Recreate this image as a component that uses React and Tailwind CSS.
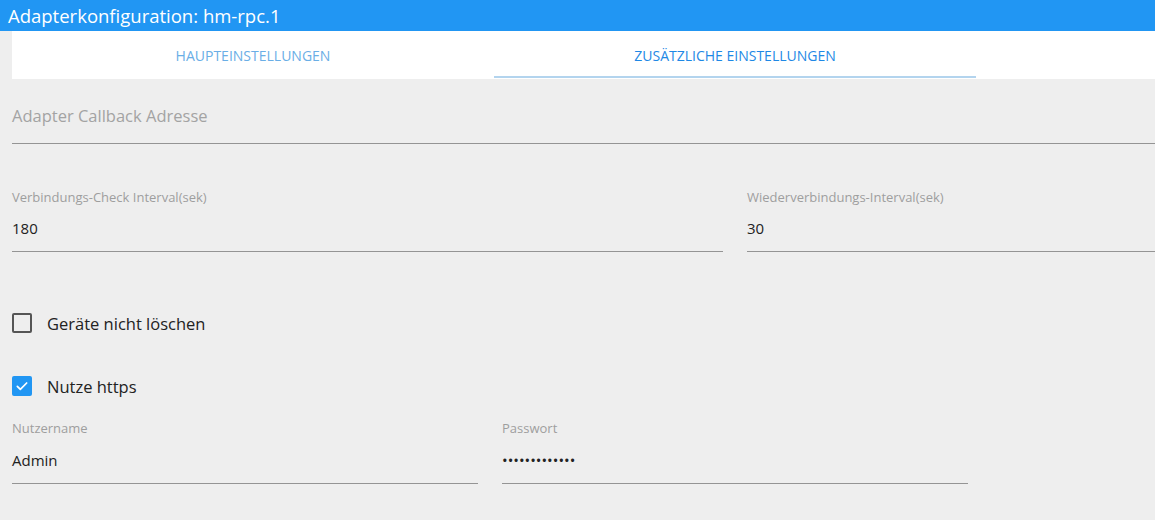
import React from "react";

const font = { fontFamily: '"Open Sans", "Noto Sans", sans-serif' };

const Field = ({ label, value, className, valueGap = "mt-[13px]" }) => (
  <div className={`flex flex-col ${className}`}>
    <label className="text-[13px] leading-[16px] text-[#9e9e9e]">{label}</label>
    <div className={`${valueGap} text-[15px] leading-[20px] text-[#222]`}>{value}</div>
    <div className="mt-[13px] h-px bg-[#949494]" />
  </div>
);

const Checkbox = ({ checked, label }) => (
  <div className="flex items-center gap-[15px]">
    {checked ? (
      <span className="flex h-[20px] w-[20px] items-center justify-center rounded-[2px] bg-[#2196f3]">
        <svg viewBox="0 0 24 24" className="h-[16px] w-[16px]" fill="none">
          <path d="M5 12.5l4.5 4.5L19 7.5" stroke="#fff" strokeWidth="2.6" strokeLinecap="round" strokeLinejoin="round" />
        </svg>
      </span>
    ) : (
      <span className="h-[20px] w-[20px] rounded-[2px] border-2 border-[#555]" />
    )}
    <span className="pt-[3px] text-[16.5px] leading-[24px] text-[#222]">{label}</span>
  </div>
);

export default function App() {
  return (
    <div className="h-[520px] w-[1155px] overflow-hidden bg-[#eeeeee]" style={font}>
      <div className="flex h-[31px] items-center bg-[#2196f3] px-[8px] text-[18.5px] text-white">
        Adapterkonfiguration: hm-rpc.1
      </div>

      <div className="ml-[12px] flex h-[48px] bg-white">
        <div className="flex w-[482px] items-center justify-center text-[14px] text-[#6aaee6]">
          HAUPTEINSTELLUNGEN
        </div>
        <div className="relative flex w-[482px] items-center justify-center text-[14px] text-[#1e88e5]">
          ZUSÄTZLICHE EINSTELLUNGEN
          <span className="absolute bottom-[1px] left-0 right-0 h-[2px] bg-[#b3d4ee]" />
        </div>
      </div>

      <div className="pl-[12px]">
        <div className="pt-[25px] text-[16.5px] leading-[24px] text-[#a3a3a3]">Adapter Callback Adresse</div>
        <div className="mt-[15px] h-px bg-[#949494]" />

        <div className="mt-[45px] flex gap-[24px]">
          <Field className="w-[711px]" label="Verbindungs-Check Interval(sek)" value="180" />
          <Field className="flex-1" label="Wiederverbindungs-Interval(sek)" value="30" />
        </div>

        <div className="mt-[57px] flex flex-col gap-[36px]">
          <Checkbox label="Geräte nicht löschen" />
          <Checkbox checked label="Nutze https" />
        </div>

        <div className="mt-[21px] flex gap-[24px]">
          <Field className="w-[466px]" valueGap="mt-[14px]" label="Nutzername" value="Admin" />
          <Field className="w-[466px]" valueGap="mt-[14px]" label="Passwort" value="•••••••••••••" />
        </div>
      </div>
    </div>
  );
}
